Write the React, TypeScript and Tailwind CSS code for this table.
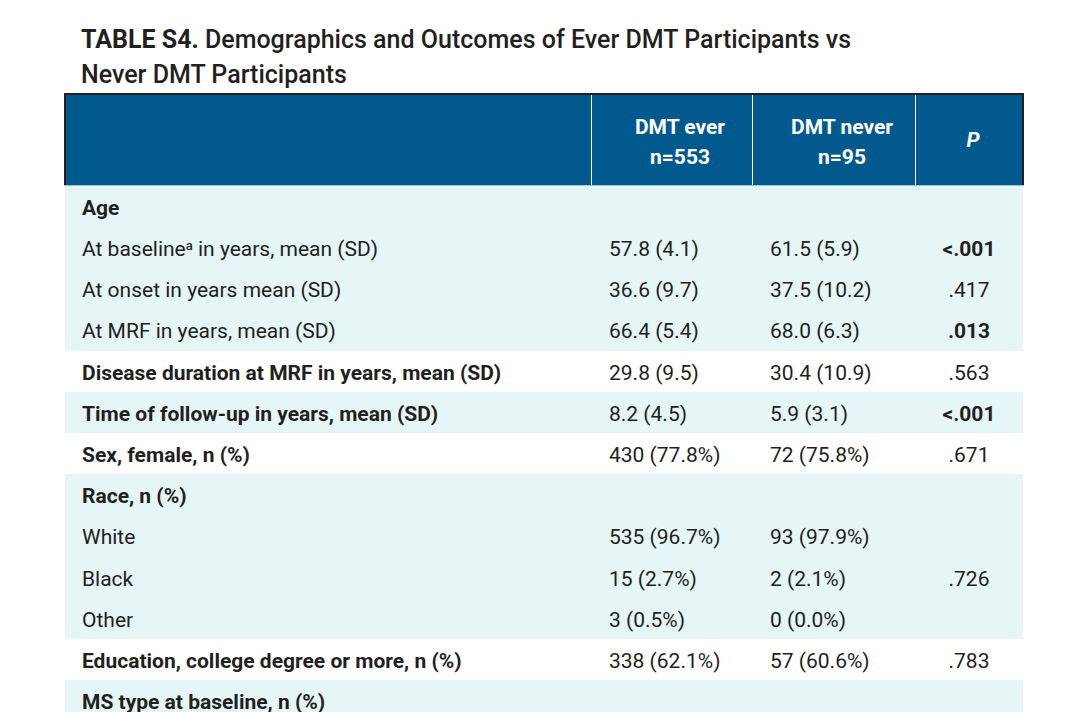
import React from "react";

type Row = {
  label: React.ReactNode;
  ever?: string;
  never?: string;
  p?: string;
  bold?: boolean;
  pBold?: boolean;
  shade: boolean;
};

const rows: Row[] = [
  { label: "Age", bold: true, shade: true },
  {
    label: (
      <>
        At baseline<sup className="text-[13px] font-medium">a</sup> in years, mean (SD)
      </>
    ),
    ever: "57.8 (4.1)",
    never: "61.5 (5.9)",
    p: "<.001",
    pBold: true,
    shade: true,
  },
  { label: "At onset in years mean (SD)", ever: "36.6 (9.7)", never: "37.5 (10.2)", p: ".417", shade: true },
  { label: "At MRF in years, mean (SD)", ever: "66.4 (5.4)", never: "68.0 (6.3)", p: ".013", pBold: true, shade: true },
  { label: "Disease duration at MRF in years, mean (SD)", bold: true, ever: "29.8 (9.5)", never: "30.4 (10.9)", p: ".563", shade: false },
  { label: "Time of follow-up in years, mean (SD)", bold: true, ever: "8.2 (4.5)", never: "5.9 (3.1)", p: "<.001", pBold: true, shade: true },
  { label: "Sex, female, n (%)", bold: true, ever: "430 (77.8%)", never: "72 (75.8%)", p: ".671", shade: false },
  { label: "Race, n (%)", bold: true, shade: true },
  { label: "White", ever: "535 (96.7%)", never: "93 (97.9%)", shade: true },
  { label: "Black", ever: "15 (2.7%)", never: "2 (2.1%)", p: ".726", shade: true },
  { label: "Other", ever: "3 (0.5%)", never: "0 (0.0%)", shade: true },
  { label: "Education, college degree or more, n (%)", bold: true, ever: "338 (62.1%)", never: "57 (60.6%)", p: ".783", shade: false },
  { label: "MS type at baseline, n (%)", bold: true, shade: true },
];

export default function App() {
  return (
    <div className="h-[712px] w-[1068px] overflow-hidden bg-white pl-16 pt-[22px] text-[#231f20] [font-family:Roboto,'Liberation_Sans',sans-serif]">
      <h1 className="pl-[17px] text-[25px] font-medium leading-[35px]">
        <span className="font-bold">TABLE S4.</span> Demographics and Outcomes of Ever DMT Participants vs
        <br />
        Never DMT Participants
      </h1>

      <div className="mt-[1px] w-[960px]">
        <div className="grid grid-cols-[525px_161px_163px_107px] border-x-2 border-t-2 border-[#231f20] bg-[#02598e] text-[21px] font-bold leading-[30px] text-white">
          <div className="h-[90px]" />
          <div className="flex h-[90px] flex-col items-center justify-center border-l border-white pl-4 pt-1">
            <span>DMT ever</span>
            <span>n=553</span>
          </div>
          <div className="flex h-[90px] flex-col items-center justify-center border-l border-white pl-4 pt-1">
            <span>DMT never</span>
            <span>n=95</span>
          </div>
          <div className="flex h-[90px] items-center justify-center border-l border-white pl-2 italic">P</div>
        </div>
        <div className="h-px bg-[#9cc6de]" />

        <div className="ml-px w-[958px]">
          {rows.map((r, i) => (
            <div
              key={i}
              className={`grid h-[41.2px] grid-cols-[526px_161px_163px_108px] items-center pt-1 text-[21px] ${
                r.shade ? "bg-[#e6f5f5]" : "bg-white"
              }`}
            >
              <div className={`pl-[17px] ${r.bold ? "font-bold" : ""}`}>{r.label}</div>
              <div className="pl-[18px]">{r.ever}</div>
              <div className="pl-[18px]">{r.never}</div>
              <div className={`text-center ${r.pBold ? "font-bold" : ""}`}>{r.p}</div>
            </div>
          ))}
        </div>
      </div>
    </div>
  );
}
